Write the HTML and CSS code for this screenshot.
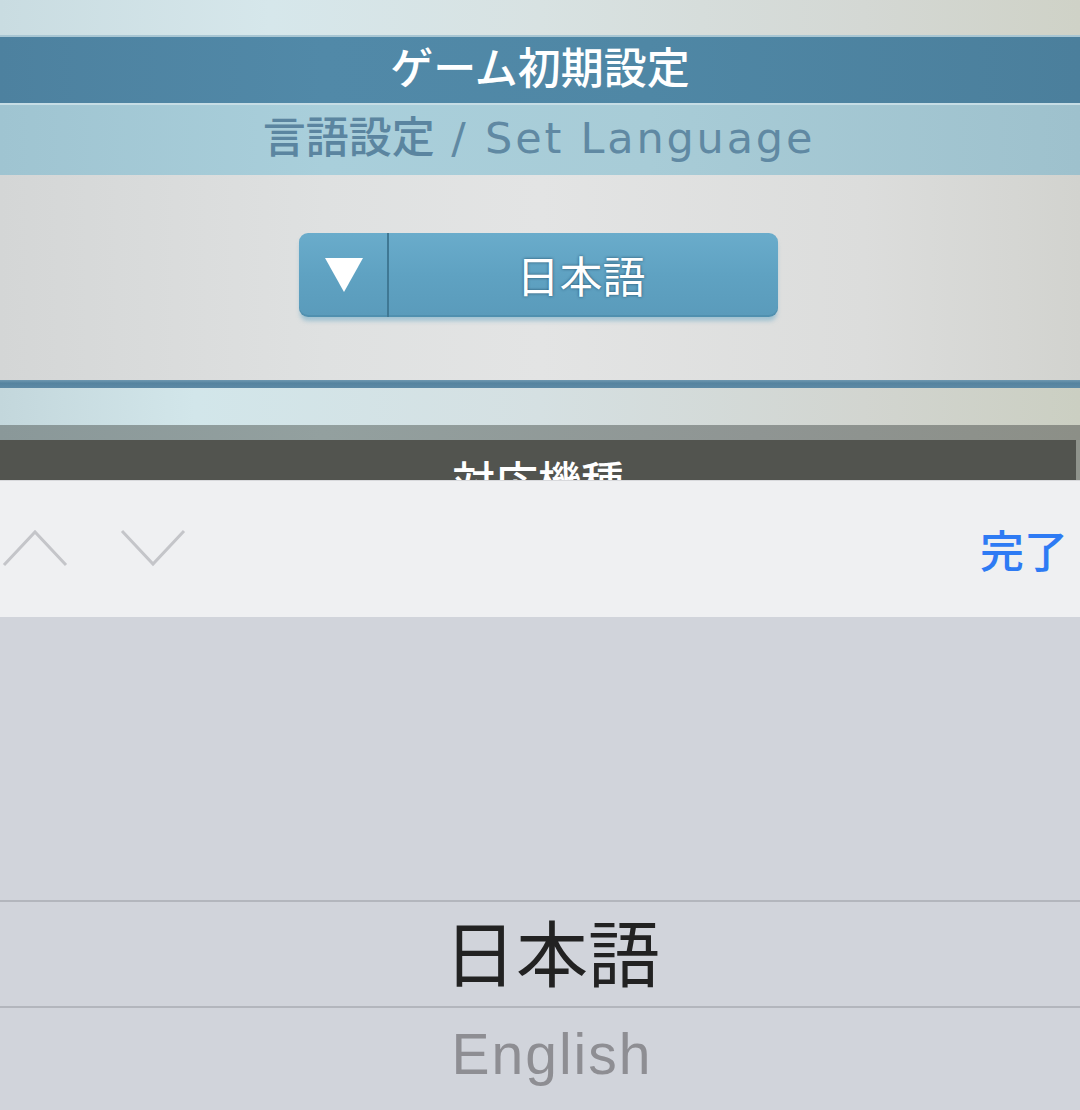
FILE: index.html
```html
<!DOCTYPE html>
<html lang="ja">
<head>
<meta charset="utf-8">
<title>ゲーム初期設定</title>
<link rel="stylesheet" href="styles.css">
</head>
<body>
<div class="page">
  <div class="top-band"></div>
  <div class="title-bar">ゲーム初期設定</div>
  <div class="sub-bar"><span class="sub-ja">言語設定</span><span class="sub-en"> / Set Language</span></div>
  <div class="content">
    <div class="select-btn">
      <div class="select-arrow"><span class="tri"></span></div>
      <div class="select-label">日本語</div>
    </div>
  </div>
  <div class="rule"></div>
  <div class="band2"></div>
  <div class="grey-band"></div>
  <div class="dark-band"><div class="dark-inner">対応機種</div></div>
</div>
<div class="toolbar">
  <div class="nav">
    <svg class="chev" width="66" height="40" viewBox="0 0 66 40"><polyline points="2,37 33,4 64,37" fill="none" stroke="#c4c5c9" stroke-width="3"/></svg>
    <svg class="chev" width="66" height="40" viewBox="0 0 66 40"><polyline points="2,3 33,36 64,3" fill="none" stroke="#c4c5c9" stroke-width="3"/></svg>
  </div>
  <div class="done">完了</div>
</div>
<div class="picker">
  <div class="picker-row selected">日本語</div>
  <div class="picker-row other">English</div>
</div>
</body>
</html>
```
FILE: styles.css
```css
html, body {
  margin: 0;
  padding: 0;
}
body {
  width: 1080px;
  height: 1110px;
  overflow: hidden;
  font-family: "Noto Sans CJK JP", "Noto Sans", sans-serif;
  background: #d1d4db;
}
.top-band {
  height: 35px;
  background: linear-gradient(90deg, #c9dce1 0%, #d6e7eb 25%, #d8e2e2 50%, #d4d8d4 80%, #cfd2c7 100%);
}
.title-bar {
  height: 66px;
  border-top: 2px solid #a8c6d3;
  background: linear-gradient(90deg, #4d819f 0%, #5189a8 30%, #4f87a5 60%, #4b7f9c 100%);
  color: #ffffff;
  font-size: 43px;
  font-weight: 500;
  line-height: 56px;
  text-align: center;
}
.sub-bar {
  height: 70px;
  border-top: 2px solid #c6dde5;
  background: linear-gradient(90deg, #9fc4d1 0%, #a9cfdb 30%, #a8ccd7 60%, #9ec1cd 100%);
  color: #5b85a0;
  line-height: 58px;
  text-align: center;
  padding-right: 2px;
}
.sub-ja {
  font-family: "Noto Sans CJK JP", sans-serif;
  font-size: 43px;
  font-weight: 500;
}
.sub-en {
  font-family: "DejaVu Sans", sans-serif;
  font-size: 43px;
  font-weight: 400;
  letter-spacing: 2.8px;
  color: #6089a3;
}
.content {
  height: 205px;
  background: linear-gradient(90deg, #d4d6d6 0%, #dfe1e1 30%, #e3e4e4 50%, #dcdddc 80%, #d2d3cf 100%);
  display: flex;
  justify-content: center;
  align-items: flex-start;
}
.select-btn {
  margin-top: 58px;
  margin-left: -4px;
  width: 479px;
  height: 84px;
  border-radius: 9px;
  background: linear-gradient(180deg, #6aaccb 0%, #5fa2c2 50%, #5a9bbb 100%);
  box-shadow: 0 5px 4px -1px rgba(120, 175, 200, 0.6), inset 0 -2px 0 rgba(60, 120, 150, 0.3);
  display: flex;
}
.select-arrow {
  width: 88px;
  border-right: 2px solid #3f7894;
  display: flex;
  justify-content: center;
  align-items: center;
}
.tri {
  width: 0;
  height: 0;
  border-left: 19px solid transparent;
  border-right: 19px solid transparent;
  border-top: 34px solid #ffffff;
  margin-left: 3px;
}
.select-label {
  flex: 1;
  display: flex;
  justify-content: center;
  align-items: center;
  color: #ffffff;
  font-size: 43px;
  font-weight: 400;
  text-shadow: 0 0 3px rgba(30, 70, 95, 0.9);
  padding-bottom: 2px;
  padding-right: 4px;
}
.rule {
  height: 8px;
  background: linear-gradient(180deg, #6f98b0 0%, #55839f 40%, #5e8aa5 100%);
}
.band2 {
  height: 37px;
  background: linear-gradient(90deg, #c3d7dc 0%, #d2e6ea 18%, #d5e0e2 50%, #d2d5d0 80%, #cbcfc2 100%);
}
.grey-band {
  height: 15px;
  background: linear-gradient(90deg, #8a9899 0%, #93a09f 30%, #8f9593 70%, #8c8f87 100%);
}
.dark-band {
  height: 40px;
  background: #8f938c;
  overflow: hidden;
  display: flex;
}
.dark-inner {
  width: 1076px;
  height: 40px;
  background: #52544f;
  color: #ffffff;
  font-size: 43px;
  font-weight: 500;
  text-align: center;
  line-height: 78px;
}
.toolbar {
  height: 137px;
  background: #eff0f2;
  display: flex;
  align-items: center;
  justify-content: space-between;
  box-sizing: border-box;
  border-top: 1px solid #d8d9dc;
}
.nav {
  display: flex;
  gap: 52px;
  margin-left: 2px;
  margin-top: -2px;
}
.chev {
  display: block;
}
.done {
  color: #2e7bf4;
  font-size: 44px;
  font-weight: 500;
  margin-right: 12px;
}
.picker {
  height: 493px;
  background: #d1d4db;
  box-sizing: border-box;
  padding-top: 283px;
}
.picker-row {
  height: 108px;
  display: flex;
  justify-content: center;
  align-items: center;
}
.selected {
  border-top: 2px solid #b3b6bd;
  border-bottom: 2px solid #b3b6bd;
  box-sizing: border-box;
  color: #222222;
  font-size: 72px;
  font-weight: 400;
  padding-left: 24px;
  padding-bottom: 9px;
}
.other {
  color: #8e8e93;
  font-family: "Liberation Sans", "Noto Sans", sans-serif;
  font-size: 57px;
  letter-spacing: 2px;
  align-items: flex-start;
  padding-top: 13px;
  padding-left: 24px;
  box-sizing: border-box;
}
```
